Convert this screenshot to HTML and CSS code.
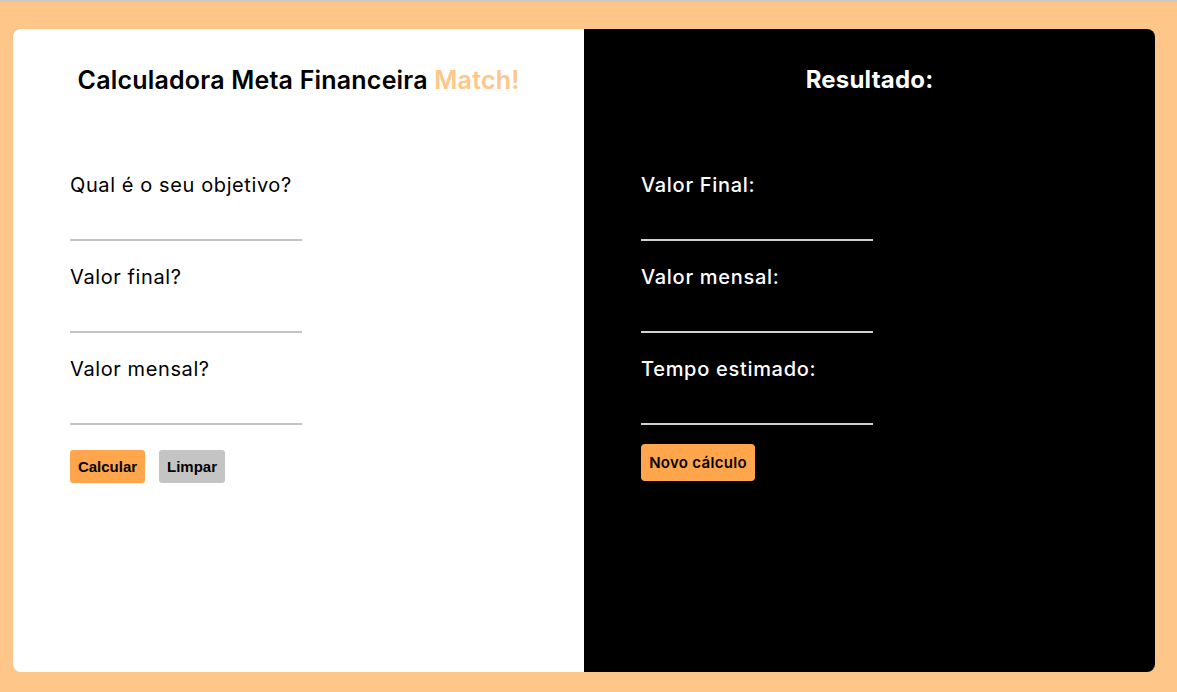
FILE: index.html
```html
<!DOCTYPE html>
<html lang="pt-BR">
<head>
<meta charset="utf-8">
<title>Calculadora Meta Financeira</title>
<link rel="stylesheet" href="styles.css">
</head>
<body>
<div class="topline"></div>
<main class="container">
  <section class="panel form-panel">
    <h1 class="title">Calculadora Meta Financeira <span class="accent">Match!</span></h1>
    <form class="fields">
      <div class="field">
        <label class="label">Qual é o seu objetivo?</label>
        <input class="input" type="text">
      </div>
      <div class="field">
        <label class="label">Valor final?</label>
        <input class="input" type="text">
      </div>
      <div class="field">
        <label class="label">Valor mensal?</label>
        <input class="input" type="text">
      </div>
      <div class="actions">
        <button type="button" class="btn btn-primary">Calcular</button>
        <button type="button" class="btn btn-grey">Limpar</button>
      </div>
    </form>
  </section>
  <section class="panel result-panel">
    <h2 class="title title-light">Resultado:</h2>
    <div class="fields">
      <div class="field">
        <span class="label label-light">Valor Final:</span>
        <div class="input input-light"></div>
      </div>
      <div class="field">
        <span class="label label-light">Valor mensal:</span>
        <div class="input input-light"></div>
      </div>
      <div class="field">
        <span class="label label-light">Tempo estimado:</span>
        <div class="input input-light"></div>
      </div>
      <div class="actions actions-result">
        <button type="button" class="btn btn-new">Novo cálculo</button>
      </div>
    </div>
  </section>
</main>
</body>
</html>
```
FILE: styles.css
```css
* { box-sizing: border-box; }
html, body { margin: 0; padding: 0; }
body {
  background: #ffc68a;
  font-family: "Inter", "Open Sans", sans-serif;
  height: 692px;
  overflow: hidden;
}
.topline {
  height: 2px;
  background: #c9c9c9;
}
.container {
  display: flex;
  margin: 27px 22px 0 13px;
  height: 643px;
  border-radius: 8px;
  overflow: hidden;
}
.panel {
  flex: 1;
  padding: 33px 57px 0;
}
.form-panel { background: #ffffff; color: #000; }
.result-panel { background: #000000; color: #fff; }
.title {
  margin: 0;
  font-size: 25px;
  line-height: 36px;
  font-weight: 600;
  text-align: center;
  letter-spacing: 0.2px;
}
.accent { color: #ffc68a; }
.title-light { color: #fff; font-weight: 700; font-size: 24px; }
.fields {
  display: flex;
  flex-direction: column;
  margin-top: 73px;
}
.field {
  display: flex;
  flex-direction: column;
  margin-bottom: 22px;
}
.label {
  display: block;
  font-size: 20px;
  line-height: 28px;
  font-weight: 400;
  letter-spacing: 0.6px;
}
.label-light { font-weight: 500; letter-spacing: 0.7px; }
.input {
  display: block;
  width: 232px;
  height: 42px;
  border: none;
  border-bottom: 2px solid #c4c4c4;
  background: transparent;
  outline: none;
  padding: 0;
}
.input-light { border-bottom-color: #d0d0d0; }
.actions {
  display: flex;
  gap: 14px;
  margin-top: 3px;
}
.btn {
  border: none;
  border-radius: 3px;
  font-family: "Liberation Sans", Arial, sans-serif;
  font-weight: 700;
  font-size: 15px;
  color: #000;
  height: 33px;
  padding: 0;
}
.btn-primary { background: #ffa64d; width: 75px; }
.btn-grey { background: #c4c4c4; width: 66px; }
.actions-result { margin-top: -3px; }
.btn-new {
  background: #ffa64d;
  font-family: "Inter", "Open Sans", sans-serif;
  font-weight: 600;
  height: 37px;
  width: 114px;
  border-radius: 4px;
  font-size: 15px;
  letter-spacing: 0.3px;
}
```
